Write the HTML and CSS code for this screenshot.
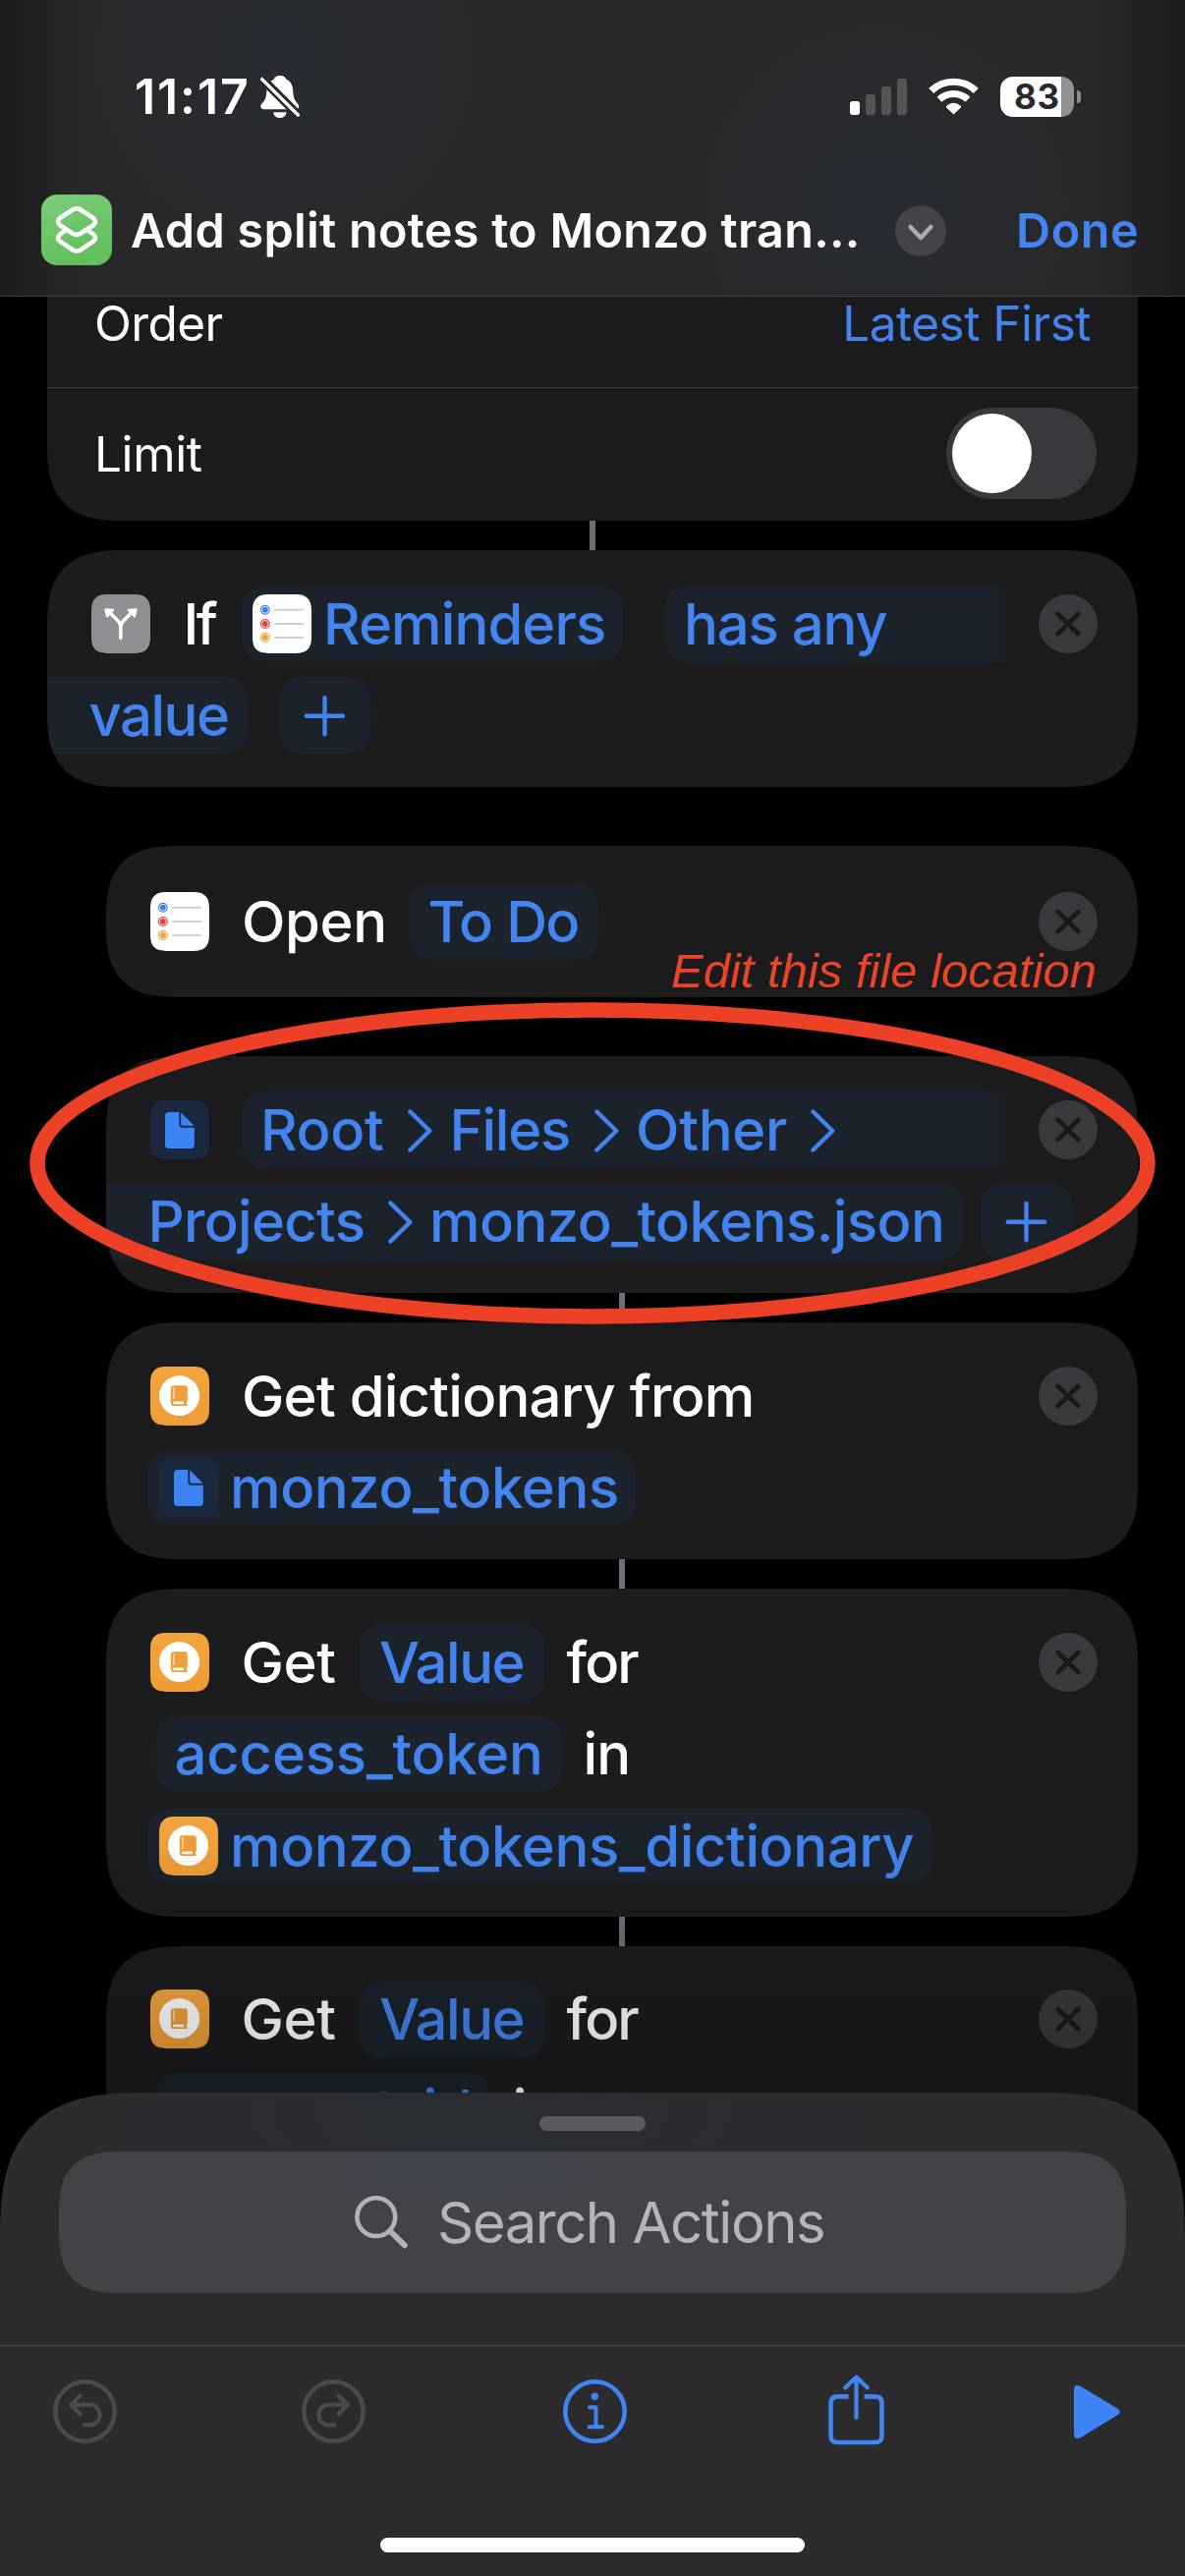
FILE: index.html
```html
<!DOCTYPE html>
<html lang="en">
<head>
<meta charset="utf-8">
<title>Add split notes to Monzo transactions</title>
<link rel="stylesheet" href="styles.css">
</head>
<body>
<svg class="defs" width="0" height="0" aria-hidden="true">
  <symbol id="reminders" viewBox="0 0 60 60">
    <path d="M22.5 15.8H52M22.5 30H52M22.5 44H52" stroke="#cfcfd1" stroke-width="2" fill="none"/>
    <g fill="#fff" stroke-width="1.2">
      <circle cx="12.8" cy="15.8" r="4.4" stroke="#3b7ff0"/><circle cx="12.8" cy="30" r="4.4" stroke="#e0463c"/><circle cx="12.8" cy="44" r="4.4" stroke="#eda33b"/>
    </g>
    <circle cx="12.8" cy="15.8" r="3" fill="#3b7ff0"/><circle cx="12.8" cy="30" r="3" fill="#e0463c"/><circle cx="12.8" cy="44" r="3" fill="#eda33b"/>
  </symbol>
  <symbol id="book" viewBox="0 0 60 60">
    <circle cx="29.5" cy="29.6" r="20.5" fill="#fff"/>
    <path d="M23.8 19.2H35.2Q37.8 19.2 37.8 21.8V34.5Q36.2 36.7 37.8 40H23.8Q20.8 40 20.8 37V22.2Q20.8 19.2 23.8 19.2Z" fill="#ef9f38"/>
    <path d="M24 21.2V33" stroke="#fff" stroke-width="1" fill="none"/>
    <path d="M24.2 35.4H34.2Q33.4 36.8 34.2 38.3H24.2Q22.8 38.2 22.8 36.9Q22.8 35.4 24.2 35.4Z" fill="#fff"/>
  </symbol>
  <symbol id="doc" viewBox="0 0 60 60">
    <path fill="#3d84f7" d="M19 12H29.3V24Q29.3 27.8 33 27.8H44.8V45Q44.8 49 40.8 49H19Q15 49 15 45V16Q15 12 19 12Z"/>
    <path fill="#3d84f7" d="M31.2 12.6L44.6 25.8H33.3Q31.2 25.8 31.2 23.6Z"/>
  </symbol>
  <symbol id="branch" viewBox="0 0 60 60">
    <path d="M29.8 44.5V33C29.8 27 24.5 25.5 19.5 19M29.8 33C29.8 27 35.2 25.5 40.2 19" fill="none" stroke="#fff" stroke-width="3.6" stroke-linecap="round"/>
    <path d="M14.3 15.2L22.3 15.8L16 22.5ZM45.7 15.2L37.7 15.8L44 22.5Z" fill="#fff" stroke="#fff" stroke-width="2" stroke-linejoin="round"/>
  </symbol>
  <symbol id="cross" viewBox="0 0 60 60">
    <circle cx="30" cy="30" r="30" fill="#3a3a3e"/>
    <path d="M19.8 20L40.2 40M40.2 20L19.8 40" stroke="#1a1a1c" stroke-width="4.8" stroke-linecap="round"/>
  </symbol>
  <symbol id="plus" viewBox="0 0 93 78">
    <path d="M27.8 39.7H65M46.5 21.2V58.2" stroke="#4384ee" stroke-width="4.4" stroke-linecap="round"/>
  </symbol>
  <symbol id="crumb" viewBox="0 0 25 44">
    <path d="M2.4 2.5L22.3 22L2.4 41.5" fill="none" stroke="#4384ee" stroke-width="4.4" stroke-linecap="round" stroke-linejoin="round"/>
  </symbol>
</svg>

<div class="screen">
  <header class="header">
    <div class="status">
      <span class="time">11:17</span>
      <svg class="bell" viewBox="0 0 40 43">
        <path d="M20 0C24.5 0 26 2.6 26 3.4C31 5.6 33 10 33.2 15.5C33.5 22.5 35 25.5 38.2 28.8C40.4 31.6 39 34.2 36 34.2H3.6C.6 34.2-.8 31.6 1.2 28.8C4.6 25.5 6.1 22.5 6.4 15.5C6.8 10 9 5.6 14 3.4C14 2.6 15.5 0 20 0Z" fill="#fff"/>
        <path d="M13 37.2H26.6Q25.4 43 19.8 43Q14.2 43 13 37.2Z" fill="#fff"/>
        <path d="M-2-.5L42 43.5" stroke="#272a2e" stroke-width="9"/>
        <path d="M1.6 3.6L38.3 40" stroke="#fff" stroke-width="3.4" stroke-linecap="round"/>
      </svg>
      <div class="indicators">
        <svg class="signal" viewBox="0 0 58 37">
          <rect x="0" y="23" width="10" height="14" rx="3" fill="#fff"/>
          <g fill="#555558"><rect x="16" y="16" width="10" height="21" rx="3"/><rect x="32" y="8" width="10" height="29" rx="3"/><rect x="48" y="0" width="10" height="37" rx="3"/></g>
        </svg>
        <svg class="wifi" viewBox="0 0 51 38">
          <g fill="none" stroke="#fff"><path d="M2.7 13.3A33.2 33.2 0 0 1 48.3 13.3" stroke-width="7.2"/><path d="M11 22.3A21 21 0 0 1 40 22.3" stroke-width="7"/></g>
          <path d="M25.5 37.6L18 30.2Q17.4 29.3 18.3 28.7Q25.5 22.8 32.7 28.7Q33.6 29.3 33 30.2Z" fill="#fff"/>
        </svg>
        <div class="battery"><span class="cell">83</span><span class="nub"></span></div>
      </div>
    </div>
    <div class="titlebar">
      <svg class="app-icon" viewBox="0 0 72 72">
        <defs><linearGradient id="green" x1="0" y1="0" x2=".4" y2="1"><stop offset="0" stop-color="#7bcd7b"/><stop offset="1" stop-color="#62bf5d"/></linearGradient></defs>
        <rect width="72" height="72" rx="16" fill="url(#green)"/>
        <g fill="none" stroke="#fff" stroke-width="4.6" stroke-linejoin="round">
          <path d="M32.4 15.2Q36 13.2 39.6 15.2L52.6 23.6Q57.2 27.6 53 31.2L39.8 39.8Q36 42 32.2 39.8L19 31.2Q14.8 27.6 19.4 23.6Z"/>
          <path d="M25 36.4L19.4 40.2Q14.8 44 19 47.6L32.2 56.4Q36 58.6 39.8 56.4L53 47.6Q57.2 44 52.6 40.2L47 36.4"/>
        </g>
      </svg>
      <h1 class="title">Add split notes to Monzo tran...</h1>
      <svg class="menu" viewBox="0 0 52 52"><circle cx="26" cy="26" r="26" fill="#434348"/><path d="M15.6 22L26 33L36.4 22" fill="none" stroke="#aaaab0" stroke-width="4.6" stroke-linecap="round" stroke-linejoin="round"/></svg>
      <span class="done">Done</span>
    </div>
  </header>

  <main class="editor">
    <section class="card settings">
      <div class="setting order"><span class="t-order">Order</span><span class="t-latest">Latest First</span></div>
      <div class="setting limit"><span class="t-limit">Limit</span><span class="toggle"><span class="knob"></span></span></div>
    </section>
    <div class="link"></div>
    <section class="card">
      <div class="line">
        <svg class="icon gray"><use href="#branch"/></svg>
        <span class="t-if">If</span>
        <span class="pill slim p-rem"><svg class="icon white"><use href="#reminders"/></svg><span class="t-rem">Reminders</span></span>
        <span class="pill fade p-has">has any</span>
        <svg class="close"><use href="#cross"/></svg>
      </div>
      <div class="line">
        <span class="pill tail p-value">value</span>
        <span class="pill add a-if"><svg><use href="#plus"/></svg></span>
      </div>
    </section>

    <div class="branch">
      <section class="card single">
        <div class="line">
          <svg class="icon white"><use href="#reminders"/></svg>
          <span class="t-open">Open</span>
          <span class="pill p-todo">To Do</span>
          <svg class="close"><use href="#cross"/></svg>
        </div>
      </section>
      <section class="card file">
        <div class="line">
          <svg class="icon navy"><use href="#doc"/></svg>
          <span class="pill fade p-path">
            <span class="t-root">Root</span><svg class="crumb c1"><use href="#crumb"/></svg>
            <span class="t-files">Files</span><svg class="crumb c2"><use href="#crumb"/></svg>
            <span class="t-other">Other</span><svg class="crumb c3"><use href="#crumb"/></svg>
          </span>
          <svg class="close"><use href="#cross"/></svg>
        </div>
        <div class="line">
          <span class="pill tail p-json"><span class="t-projects">Projects</span><svg class="crumb c4"><use href="#crumb"/></svg><span class="t-json">monzo_tokens.json</span></span>
          <span class="pill add a-file"><svg><use href="#plus"/></svg></span>
        </div>
      </section>
      <div class="link"></div>
      <section class="card">
        <div class="line">
          <svg class="icon orange"><use href="#book"/></svg>
          <span class="t-getdict">Get dictionary from</span>
          <svg class="close"><use href="#cross"/></svg>
        </div>
        <div class="line">
          <span class="pill slim p-tokens"><svg class="icon navy"><use href="#doc"/></svg><span class="t-tokens">monzo_tokens</span></span>
        </div>
      </section>
      <div class="link"></div>
      <section class="card triple">
        <div class="line">
          <svg class="icon orange"><use href="#book"/></svg>
          <span class="t-get">Get</span>
          <span class="pill p-val">Value</span>
          <span class="t-for">for</span>
          <svg class="close"><use href="#cross"/></svg>
        </div>
        <div class="line">
          <span class="pill p-access">access_token</span>
          <span class="t-in">in</span>
        </div>
        <div class="line">
          <span class="pill slim p-dict"><svg class="icon orange"><use href="#book"/></svg><span class="t-tokens">monzo_tokens_dictionary</span></span>
        </div>
      </section>
      <div class="link"></div>
      <section class="card triple last">
        <div class="line">
          <svg class="icon orange"><use href="#book"/></svg>
          <span class="t-get">Get</span>
          <span class="pill p-val">Value</span>
          <span class="t-for">for</span>
          <svg class="close"><use href="#cross"/></svg>
        </div>
        <div class="line">
          <span class="pill p-account">account_id</span>
          <span class="t-in">in</span>
        </div>
      </section>
    </div>
  </main>

  <div class="shade"></div>

  <footer class="sheet">
    <div class="grabber"></div>
    <div class="search">
      <svg class="glass" viewBox="0 0 54 54"><circle cx="21.8" cy="21.6" r="19.4" fill="none" stroke="#b2b2b8" stroke-width="4.6"/><path d="M36 36L50.8 50.4" stroke="#b2b2b8" stroke-width="5.8" stroke-linecap="round"/></svg>
      <span class="t-search">Search Actions</span>
    </div>
    <nav class="toolbar">
      <svg class="undo" viewBox="0 0 65 65" fill="none" stroke="#4b4b4d" stroke-linecap="round" stroke-linejoin="round"><circle cx="32.5" cy="32.5" r="30.2" stroke-width="4.6"/><path d="M27.5 16.5L18.2 25.7L27.5 35M18.5 25.7H38A9.6 10.3 0 0 1 38 46.3H31.5" stroke-width="4.2"/></svg>
      <svg class="redo" viewBox="0 0 65 65" fill="none" stroke="#4b4b4d" stroke-linecap="round" stroke-linejoin="round"><circle cx="32.5" cy="32.5" r="30.2" stroke-width="4.6"/><path d="M37.5 16.5L46.8 25.7L37.5 35M46.5 25.7H27A9.6 10.3 0 0 0 27 46.3H33.5" stroke-width="4.2"/></svg>
      <svg class="info" viewBox="0 0 65 65" fill="none" stroke="#4285f0" stroke-linecap="round" stroke-linejoin="round"><circle cx="32.5" cy="32.5" r="30.2" stroke-width="4.6"/><path d="M27 28.2H33.5V48.2M26.5 48.2H40" stroke-width="4"/><circle cx="32.3" cy="17.2" r="3.7" fill="#4285f0" stroke="none"/></svg>
      <svg class="share" viewBox="0 0 57 72" fill="none" stroke="#4285f0" stroke-width="4.6" stroke-linecap="round" stroke-linejoin="round"><path d="M20.5 22.4H9.3Q2.5 22.4 2.5 29.2V62.2Q2.5 69 9.3 69H47.7Q54.5 69 54.5 62.2V29.2Q54.5 22.4 47.7 22.4H36.5" stroke-linecap="butt"/><path d="M28.5 44V3M17.3 13.2L28.5 2.6L39.7 13.2" stroke-width="4.2"/></svg>
      <svg class="play" viewBox="0 0 47 54"><path d="M0 4Q0 0 3.6 0Q5 0 7 1L44.6 23.8Q49.2 26.9 44.6 30L7 53Q5 54 3.6 54Q0 54 0 50Z" fill="#3d84f7"/></svg>
    </nav>
    <div class="home"></div>
  </footer>

  <svg class="ring" viewBox="0 0 1146 328"><ellipse cx="573" cy="164" rx="565" ry="156" fill="none" stroke="#ec4126" stroke-width="15.5"/></svg>
  <div class="note">Edit this file location</div>
</div>
</body>
</html>
```
FILE: styles.css
```css
* { box-sizing: border-box; }
body {
  margin: 0;
  background: #000;
  color: #fff;
  font-family: Inter, "Liberation Sans", sans-serif;
}
.defs { display: block; }
svg { display: block; flex: none; }

.screen {
  position: relative;
  width: 1206px;
  height: 2622px;
  overflow: hidden;
  background: #000;
}

/* Header */
.header {
  height: 302px;
  padding-top: 68px;
  border-bottom: 1px solid #3e3e40;
  background:
    linear-gradient(90deg, rgba(24, 24, 25, .75), transparent 90px, transparent 1110px, rgba(24, 24, 25, .75)),
    radial-gradient(circle at 290px 60px, rgba(39, 44, 51, .8), transparent 210px),
    radial-gradient(circle at 900px 210px, rgba(39, 44, 51, .9), transparent 200px),
    #29292b;
}
.status { display: flex; align-items: center; height: 60px; padding: 0 106px 0 137px; }
.time { width: 115px; font-size: 50px; font-weight: 600; line-height: 60px; letter-spacing: 1.9px; white-space: nowrap; }
.bell { width: 40px; height: 43px; margin: 1px 0 0 12.5px; overflow: hidden; }
.indicators { display: flex; align-items: center; gap: 22px; height: 59px; margin-left: auto; }
.signal { width: 58px; height: 37px; }
.wifi { width: 51px; height: 38px; }
.battery { display: flex; align-items: center; gap: 3px; }
.cell {
  width: 75px; height: 41px; padding-left: 14px;
  border-radius: 13px;
  background: linear-gradient(90deg, #fff 62px, #929295 62px);
  color: #29292b;
  font-size: 35px; font-weight: 700; line-height: 41px; letter-spacing: .7px;
}
.nub { width: 4px; height: 13px; border-radius: 0 4px 4px 0; background: #8d8d90; }

.titlebar { display: flex; align-items: center; height: 72px; margin-top: 70px; padding-left: 42px; }
.app-icon { width: 72px; height: 72px; }
.title { width: 778px; margin: 2px 0 0 19px; font-size: 48.5px; font-weight: 600; line-height: 72px; letter-spacing: .3px; white-space: nowrap; }
.menu { width: 52px; height: 52px; margin-top: 2px; }
.done { margin: 2px 0 0 71px; color: #4384ee; font-size: 48.5px; font-weight: 600; line-height: 72px; letter-spacing: .6px; }

/* Action cards */
.editor { padding: 0 48px; }
.card {
  height: 241px;
  padding: 35.5px 41px 0 45px;
  border-radius: 81px;
  corner-shape: superellipse(1.5);
  background: #1c1c1e;
  overflow: hidden;
}
.single { height: 154px; padding-top: 38px; border-radius: 77px; }
.triple { height: 334px; }
.last { padding-top: 34.5px; }
.file { margin-top: 60px; }
.branch { margin-top: 60px; padding-left: 60px; }
.link { width: 6px; height: 30px; margin: 0 auto; background: #6e6e74; }

.settings { height: 228px; padding: 0; border-radius: 0 0 81px 81px; }
.setting { display: flex; justify-content: space-between; padding: 0 48px 0 48px; font-size: 49.5px; }
.order { height: 93px; border-bottom: 1px solid #3f3f42; line-height: 54.4px; }
.limit { align-items: center; height: 135px; padding: 0 42px 0 48px; line-height: 135px; }
.t-order { letter-spacing: -.6px; }
.t-latest { color: #4384ee; letter-spacing: -.5px; }
.t-limit { letter-spacing: -.4px; }
.toggle { width: 153px; height: 93px; margin-bottom: 2px; padding: 6px; border-radius: 47px; background: #39393d; }
.knob { display: block; width: 81px; height: 81px; border-radius: 50%; background: #fff; }

.line {
  display: flex;
  align-items: center;
  height: 78px;
  margin-bottom: 15.5px;
  font-size: 58px;
  font-weight: 500;
  line-height: 78px;
  white-space: nowrap;
}
.icon { width: 60px; height: 60px; border-radius: 18px; corner-shape: superellipse(1.5); }
.gray { background: #8e8e93; }
.white { background: #fff; }
.navy { background: #1b2940; }
.orange { background: linear-gradient(#f2a53e, #ee9c36); }
.close { width: 60px; height: 60px; margin-left: auto; }

.pill {
  display: flex;
  flex: none;
  align-items: center;
  height: 78px;
  border-radius: 27px;
  corner-shape: superellipse(1.4);
  background: #1c232d;
  color: #4384ee;
}
.slim { height: 76px; }
.fade { border-radius: 27px 0 0 27px; background: linear-gradient(90deg, #1c232d calc(100% - 32px), #1c1c1e); }
.tail { margin-left: -45px; border-radius: 0 27px 27px 0; }
.add { width: 93px; }
.add svg { width: 93px; height: 78px; }
.crumb { width: 25px; height: 44px; margin-top: 2px; }

/* Words and tokens on each line */
.t-if { width: 34px; margin-left: 33.5px; letter-spacing: -2.6px; }
.p-rem { width: 388px; margin-left: 25px; padding-left: 11px; }
.t-rem { margin-left: 12.5px; letter-spacing: -.9px; }
.p-has { width: 357px; margin-left: 43.5px; padding-left: 19px; letter-spacing: -1.2px; }
.p-value { width: 204px; padding-left: 42.5px; letter-spacing: -1.5px; }
.a-if { margin-left: 32px; }

.t-open { width: 145px; margin-left: 33px; letter-spacing: -.4px; }
.p-todo { width: 193px; margin-left: 25px; padding-left: 19.6px; letter-spacing: -1.9px; word-spacing: 1.5px; }

.p-path { width: 788px; margin-left: 33px; padding-left: 19px; }
.t-root { width: 125px; letter-spacing: -.3px; }
.c1 { margin-left: 25px; }
.t-files { width: 121.5px; margin-left: 17.5px; letter-spacing: -1.25px; }
.c2 { margin-left: 26px; }
.t-other { width: 154px; margin-left: 17px; letter-spacing: -.3px; }
.c3 { margin-left: 24px; }
.p-json { width: 872px; padding-left: 42.6px; }
.t-projects { width: 218.4px; letter-spacing: -.7px; }
.c4 { margin-left: 26px; }
.t-json { margin-left: 17px; letter-spacing: -.55px; }
.a-file { margin-left: 18px; }

.t-getdict { margin-left: 33px; letter-spacing: -.75px; }
.p-tokens { width: 497px; margin-left: -3px; padding-left: 12px; }
.t-tokens { margin-left: 12px; letter-spacing: -.38px; }

.t-get { width: 95.5px; margin-left: 32.5px; letter-spacing: -.4px; }
.p-val { width: 188.4px; margin-left: 24.6px; padding-left: 20.5px; letter-spacing: -1.5px; }
.t-for { margin-left: 22.5px; letter-spacing: -1.8px; }
.p-access { width: 411.7px; margin-left: 6px; padding-left: 18.6px; letter-spacing: -.2px; }
.t-in { margin-left: 22.8px; letter-spacing: -.8px; }
.p-dict { width: 799px; margin-left: -3px; padding-left: 12px; }
.p-account { width: 340px; margin-left: 6px; padding-left: 18.6px; }

/* Dimming above the bottom sheet */
.shade {
  position: absolute;
  left: 0; right: 0; top: 1850px;
  height: 400px;
  background: linear-gradient(transparent, rgba(0, 0, 0, .03) 60px, rgba(0, 0, 0, .2) 290px);
}

/* Bottom sheet */
.sheet {
  position: absolute;
  left: 0; right: 0; bottom: 0;
  height: 492px;
  padding-top: 24px;
  border-radius: 152px 152px 0 0;
  corner-shape: superellipse(1.5);
  background:
    radial-gradient(ellipse 520px 200px at 500px 20px, rgba(42, 46, 51, .9), transparent),
    #2c2c2e;
}
.grabber { width: 108px; height: 15px; margin: 0 auto; border-radius: 8px; background: #5a5b5e; }
.search {
  display: flex;
  align-items: center;
  height: 144px;
  margin: 21px 60px 0;
  padding-left: 301px;
  border-radius: 66px;
  corner-shape: superellipse(1.5);
  background: radial-gradient(ellipse 450px 120px at 420px 20px, #41444b, transparent), #434347;
}
.glass { width: 54px; height: 54px; }
.t-search { margin-left: 30px; color: #b4b4ba; font-size: 58px; line-height: 144px; letter-spacing: -1.46px; white-space: nowrap; }
.toolbar {
  display: flex;
  align-items: center;
  height: 134px;
  margin-top: 53px;
  padding-left: 54px;
  border-top: 1px solid #4a4a4c;
}
.undo, .redo, .info { width: 65px; height: 65px; }
.redo { margin-left: 188px; }
.info { margin-left: 201px; }
.share { width: 57px; height: 72px; margin: 0 0 3px 205px; }
.play { width: 47px; height: 54px; margin: 1px 0 0 193px; }
.home { width: 432px; height: 15px; margin: 62px auto 0; border-radius: 8px; background: #fff; }

/* Markup drawn over the screen */
.ring { position: absolute; left: 29.5px; top: 1019.5px; width: 1146px; height: 328px; }
.note {
  position: absolute;
  left: 683px; top: 960px;
  color: #ec4427;
  font: italic 400 49px/56px "Liberation Sans", sans-serif;
  white-space: nowrap;
}
```
